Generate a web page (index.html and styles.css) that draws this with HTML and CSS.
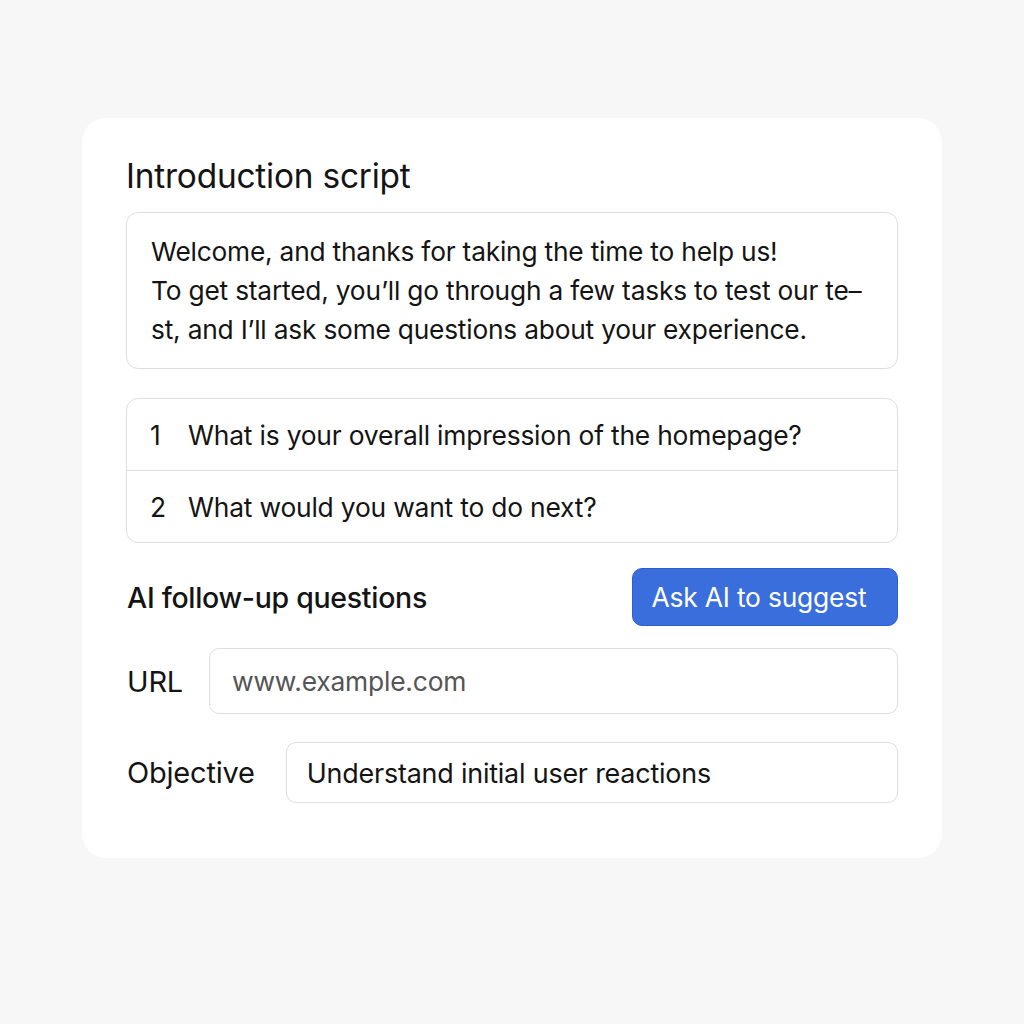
FILE: index.html
```html
<!DOCTYPE html>
<html lang="en">
<head>
<meta charset="utf-8">
<title>Introduction script</title>
<link rel="stylesheet" href="styles.css">
</head>
<body>
<main class="card">
  <h1 class="title">Introduction script</h1>
  <div class="script-box">
    <p>Welcome, and thanks for taking the time to help us!<br>To get started, you’ll go through a few tasks to test our te–<br>st, and I’ll ask some questions about your experience.</p>
  </div>
  <ol class="questions">
    <li class="q-row"><span class="q-num">1</span><span class="q-text">What is your overall impression of the homepage?</span></li>
    <li class="q-row"><span class="q-num">2</span><span class="q-text">What would you want to do next?</span></li>
  </ol>
  <div class="ai-row">
    <h2 class="ai-label">AI follow-up questions</h2>
    <button class="ai-btn" type="button">Ask AI to suggest</button>
  </div>
  <div class="field field-url">
    <span class="field-label">URL</span>
    <div class="input placeholder">www.example.com</div>
  </div>
  <div class="field field-obj">
    <span class="field-label">Objective</span>
    <div class="input value">Understand initial user reactions</div>
  </div>
</main>
</body>
</html>
```

FILE: styles.css
```css
* { box-sizing: border-box; }
html, body { margin: 0; padding: 0; }
body {
  background: #f7f7f7;
  font-family: Inter, "Noto Sans", "Liberation Sans", sans-serif;
  color: #141414;
  width: 1024px;
  height: 1024px;
  padding: 118px 0 0 82px;
}
.card {
  width: 860px;
  height: 740px;
  background: #ffffff;
  border-radius: 24px;
  padding: 37px 44px 0 44px;
  display: flex;
  flex-direction: column;
}
.title {
  margin: 0;
  font-size: 33.4px;
  font-weight: 400;
  line-height: 42px;
  letter-spacing: -0.2px;
}
.script-box {
  margin-top: 15px;
  height: 157px;
  border: 1.5px solid #dedede;
  border-radius: 12px;
  padding: 19px 24px;
}
.script-box p {
  margin: 0;
  font-size: 26.3px;
  line-height: 39px;
  letter-spacing: -0.2px;
}
.questions {
  list-style: none;
  margin: 29px 0 0 0;
  padding: 0;
  border: 1.5px solid #dedede;
  border-radius: 12px;
  height: 145px;
  display: flex;
  flex-direction: column;
}
.q-row {
  flex: 1;
  display: flex;
  align-items: center;
  padding-left: 23px;
  font-size: 26.4px;
  letter-spacing: -0.2px;
}
.q-row + .q-row { border-top: 1.5px solid #dedede; }
.q-num { width: 38px; }
.ai-row {
  margin-top: 25px;
  display: flex;
  justify-content: space-between;
  align-items: center;
  height: 58px;
}
.ai-label {
  margin: 0 0 0 1px;
  font-size: 28.5px;
  font-weight: 500;
  letter-spacing: -0.3px;
}
.ai-btn {
  width: 266px;
  height: 58px;
  background: #3a6edc;
  border: 1.5px solid #2d5fcc;
  border-radius: 10px;
  color: #ffffff;
  font-family: inherit;
  font-size: 26.4px;
  letter-spacing: -0.2px;
  padding: 0 12px 0 0;
}
.field {
  display: flex;
  align-items: center;
}
.field-url { margin-top: 22px; gap: 26px; }
.field-obj { margin-top: 28px; gap: 31px; }
.field-label {
  font-size: 29px;
  margin-left: 1px;
  letter-spacing: -0.2px;
}
.input {
  flex: 1;
  border: 1.5px solid #dedede;
  border-radius: 10px;
  display: flex;
  align-items: center;
  letter-spacing: -0.2px;
}
.field-url .input { height: 66px; padding-left: 22px; font-size: 26.4px; }
.field-obj .input { height: 61px; padding-left: 20px; font-size: 26.9px; }
.placeholder { color: #555555; }
.value { color: #141414; }
```
